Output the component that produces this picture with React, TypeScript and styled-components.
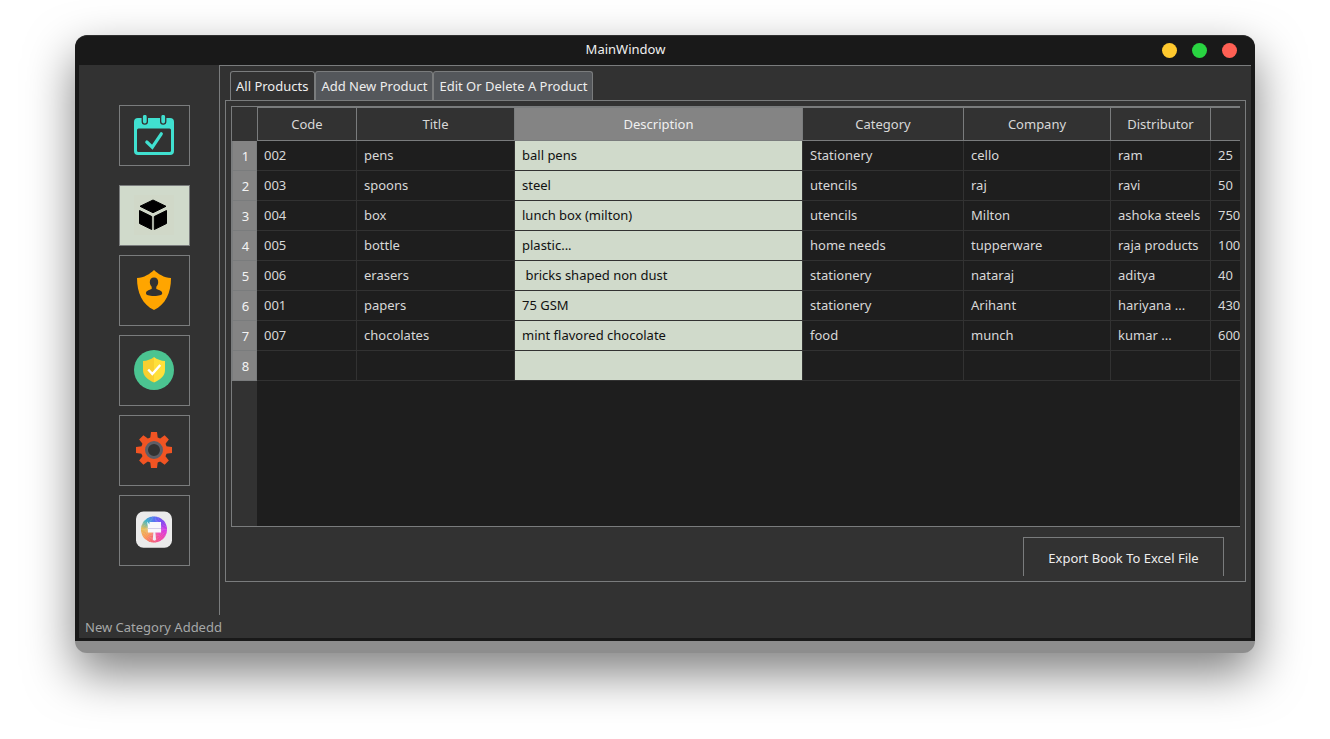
import React from "react";
import styled, { createGlobalStyle, css } from "styled-components";

const line = "#7a7c7d";
const panel = "#323232";

const GlobalStyle = createGlobalStyle`
  *, *::before, *::after { box-sizing: border-box; }
  body { margin: 0; background: #ffffff; }
  body, button {
    font-family: "Noto Sans", sans-serif;
    font-size: 13px;
    line-height: 18px;
  }
`;

const Desktop = styled.div`
  display: flex;
  min-height: 100vh;
  padding: 35px 75px 86px;
`;

const Window = styled.div`
  flex: 1;
  min-width: 0;
  display: flex;
  flex-direction: column;
  padding-bottom: 12px;
  border-radius: 12px;
  background: #8d8d8d;
  box-shadow: 0 20px 48px rgba(0, 0, 0, 0.5);
  overflow: hidden;
`;

const Frame = styled.div`
  flex: 1;
  display: flex;
  flex-direction: column;
  padding: 0 4px 3px;
  border-radius: 12px 12px 0 0;
  border-top: 1px solid #303030;
  background: #191919;
`;

const TitleBar = styled.header`
  display: flex;
  align-items: center;
  height: 29px;
  padding: 0 14px 0 10px;
`;

const Title = styled.h1`
  flex: 1;
  margin: 0;
  padding-bottom: 4px;
  font-size: 13px;
  font-weight: 400;
  text-align: center;
  color: #f0f0f0;
`;

const WindowControls = styled.div`
  display: flex;
  gap: 15px;
`;

const WindowControl = styled.button<{ $color: string }>`
  width: 15px;
  height: 15px;
  padding: 0;
  border: 0;
  border-radius: 50%;
  background: ${(p) => p.$color};
`;

const Body = styled.div`
  flex: 1;
  display: flex;
  background: ${panel};
`;

const Sidebar = styled.nav`
  flex: none;
  width: 140px;
  display: flex;
  flex-direction: column;
  gap: 9px;
  padding: 40px 29px 0 40px;
`;

const NavButton = styled.button<{ $compact?: boolean; $active?: boolean }>`
  display: flex;
  align-items: center;
  justify-content: center;
  height: ${(p) => (p.$compact ? 61 : 71)}px;
  padding: 0 2px 2px 0;
  border: 1px solid ${line};
  background: ${(p) => (p.$active ? "#d0dacb" : "transparent")};
  &:first-child { margin-bottom: 10px; }
`;

const Main = styled.main`
  flex: 1;
  min-width: 0;
  display: flex;
  flex-direction: column;
  padding: 5px 5px 33px;
  border-top: 1px solid ${line};
  border-left: 1px solid ${line};
`;

const Tabs = styled.div`
  display: flex;
  padding-left: 5px;
`;

const Tab = styled.button<{ $active?: boolean }>`
  height: 29px;
  padding: 0 ${(p) => (p.$active ? 6 : 5)}px 0 5px;
  border: 1px solid ${line};
  border-bottom: 0;
  border-radius: 3px 3px 0 0;
  background: ${(p) => (p.$active ? panel : "#54575b")};
  color: #eeeeee;
  white-space: nowrap;
`;

const Pane = styled.section`
  flex: 1;
  display: flex;
  flex-direction: column;
  padding: 5px;
  border: 1px solid ${line};
`;

const TableArea = styled.div`
  flex: 1;
  overflow: hidden;
  border: 1px solid ${line};
  border-right: 0;
  background: linear-gradient(to right, ${panel} 25px, #1e1e1e 25px);
`;

const Table = styled.table`
  width: 100%;
  min-width: 1008px;
  table-layout: fixed;
  border-collapse: separate;
  border-spacing: 0;
  color: #d8d8d8;
`;

const selectedCell = css`
  background: #d0dacb;
  color: #111111;
`;

const HeadCell = styled.th<{ $selected?: boolean }>`
  height: 34px;
  padding: 0;
  overflow: hidden;
  border: solid ${line};
  border-width: 1px 1px 1px 0;
  background: ${(p) => (p.$selected ? "#848484" : panel)};
  color: ${(p) => (p.$selected ? "#f0f0f0" : "#d8d8d8")};
  font-weight: 400;
  &:nth-child(2) { border-left-width: 1px; }
  &:last-child { border-right-width: 0; }
`;

const Corner = styled.td`
  padding: 0;
  background: ${panel};
`;

const RowHead = styled.th`
  height: 30px;
  padding: 0 0 0 2px;
  border: 1px solid ${line};
  border-top-width: 0;
  background: #848484;
  color: #f4f4f4;
  font-weight: 400;
`;

const Cell = styled.td<{ $selected?: boolean }>`
  height: 30px;
  padding: 0 0 2px 7px;
  overflow: hidden;
  white-space: pre;
  border: solid #323232;
  border-width: 0 1px 1px 0;
  ${(p) => p.$selected && selectedCell}
  &:last-child { border-right-width: 0; }
`;

const Actions = styled.div`
  display: flex;
  justify-content: flex-end;
  padding: 10px 16px 0 0;
`;

const ExportButton = styled.button`
  width: 201px;
  height: 39px;
  padding: 1px 0 0;
  border: 1px solid ${line};
  border-bottom: 0;
  background: transparent;
  color: #eeeeee;
`;

const StatusBar = styled.footer`
  height: 23px;
  padding: 3px 6px;
  background: ${panel};
  color: #a6a8a8;
`;

const Icon = styled.svg.attrs({ width: 40, height: 40, viewBox: "0 0 40 40", "aria-hidden": true })`
  display: block;
`;

const CalendarIcon = () => (
  <Icon fill="none">
    <rect y="3" width="40" height="37" rx="4" fill="#40e0d0" />
    <rect x="3" y="13.5" width="34" height="23.5" rx="1.5" fill={panel} />
    <path d="M10.8 0V6.5M29.2 0V6.5" stroke={panel} strokeWidth="6.4" strokeLinecap="round" />
    <path d="M10.8 1.8V6.5M29.2 1.8V6.5" stroke="#40e0d0" strokeWidth="3.8" strokeLinecap="round" />
    <path d="M12.8 27L18.3 32.2L27.3 18.8" stroke="#40e0d0" strokeWidth="3.2" strokeLinecap="round" />
  </Icon>
);

const BoxIcon = () => (
  <Icon stroke="#000" strokeWidth="1" strokeLinejoin="round">
    <rect width="40" height="40" fill="#d0d8c8" stroke="none" />
    <path d="M19 5L32 11.3L19 17.7L6 11.3Z" />
    <path d="M5.500 15.5L17.7 21.5V34.5L5.500 28.5Z" />
    <path d="M20.3 21.5L32.5 15.5V28.5L20.3 34.5Z" />
  </Icon>
);

const UserShieldIcon = () => (
  <Icon>
    <path d="M20 0C16 3.8 10 7.8 3 8C3 23 8.5 34.5 20 40C31.5 34.5 37 23 37 8C30 7.8 24 3.8 20 0Z" fill="#ffa500" />
    <path
      d="M20 7.6C17.3 7.6 15.7 9.6 15.8 12.3C15.9 14.5 16.9 15.8 17.7 16.8V19C15.5 20 12 20.3 12 23.3C12 25.2 15 26 20 26C25 26 28.2 25.2 28.2 23.3C28.2 20.3 24.5 20 22.3 19V16.8C23.2 15.8 24.1 14.5 24.2 12.3C24.3 9.6 22.7 7.6 20 7.6Z"
      fill={panel}
    />
  </Icon>
);

const CheckShieldIcon = () => (
  <Icon fill="none">
    <circle cx="20" cy="20" r="20" fill="#4bc491" />
    <path d="M20 7C17 9.5 13 10.8 9 11V20C9 26 14 30 20 32.5Z" fill="#f9cf30" />
    <path d="M20 7C23 9.5 27 10.8 31 11V20C31 26 26 30 20 32.5Z" fill="#ffe03a" />
    <path d="M14.2 19.5L18.3 24L26.3 15" stroke="#fff" strokeWidth="2.4" />
  </Icon>
);

const GearIcon = () => (
  <Icon fill="none">
    <g fill="#f15423">
      {[0, 45, 90, 135].map((angle) => (
        <path key={angle} d="M17 2H23L24 10V30L23 38H17L16 30V10Z" transform={`rotate(${angle} 20 20)`} />
      ))}
      <circle cx="20" cy="20" r="13" />
    </g>
    <circle cx="20" cy="20" r="7.5" fill={panel} stroke="#5e5e66" strokeWidth="3" />
  </Icon>
);

// Colour wheel stops, clockwise from the top.
const wheel = [
  [90, 110, 245],
  [130, 70, 240],
  [215, 60, 225],
  [240, 70, 170],
  [245, 95, 120],
  [250, 150, 85],
  [230, 190, 90],
  [60, 180, 200],
];

const wedges = Array.from({ length: 48 }, (_, i) => {
  const at = (i / 48) * wheel.length;
  const from = wheel[Math.floor(at)];
  const to = wheel[(Math.floor(at) + 1) % wheel.length];
  const mix = from.map((c, k) => Math.round(c + (to[k] - c) * (at % 1)));
  const point = (step: number) => {
    const a = (step / 48) * Math.PI * 2;
    return `${(20 + 13 * Math.sin(a)).toFixed(2)} ${(19.5 - 13 * Math.cos(a)).toFixed(2)}`;
  };
  return { d: `M20 19.5L${point(i)}A13 13 0 0 1 ${point(i + 1.2)}Z`, fill: `rgb(${mix.join(",")})` };
});

const PaintIcon = () => (
  <Icon>
    <rect x="2" y="1.5" width="36" height="36.3" rx="7.5" fill="#ebebeb" />
    {wedges.map((w) => (
      <path key={w.d} d={w.d} fill={w.fill} />
    ))}
    <path d="M13 11.5L15.5 14.5V12H27V22.5H13.8V16Z" fill="#f8f7fc" />
    <path d="M13.8 18.5H27" stroke="#d3cfe8" strokeWidth="1" />
    <path d="M19.4 22H21.3L22 29C22 31.3 18.8 31.3 18.8 29Z" fill="#f0edf7" />
  </Icon>
);

const navItems = [
  { label: "Calendar", Glyph: CalendarIcon, compact: true },
  { label: "Products", Glyph: BoxIcon, compact: true, active: true },
  { label: "Users", Glyph: UserShieldIcon },
  { label: "Security", Glyph: CheckShieldIcon },
  { label: "Settings", Glyph: GearIcon },
  { label: "Themes", Glyph: PaintIcon },
];

const columns = [
  { name: "Code", width: 100 },
  { name: "Title", width: 158 },
  { name: "Description", width: 288 },
  { name: "Category", width: 161 },
  { name: "Company", width: 147 },
  { name: "Distributor", width: 100 },
  { name: "" },
];
const selectedColumn = 2;

const rows = [
  ["002", "pens", "ball pens", "Stationery", "cello", "ram", "25"],
  ["003", "spoons", "steel", "utencils", "raj", "ravi", "50"],
  ["004", "box", "lunch box (milton)", "utencils", "Milton", "ashoka steels", "750"],
  ["005", "bottle", "plastic...", "home needs", "tupperware", "raja products", "100"],
  ["006", "erasers", " bricks shaped non dust", "stationery", "nataraj", "aditya", "40"],
  ["001", "papers", "75 GSM", "stationery", "Arihant", "hariyana ...", "430"],
  ["007", "chocolates", "mint flavored chocolate", "food", "munch", "kumar ...", "600"],
  ["", "", "", "", "", "", ""],
];

export default function App() {
  return (
    <>
      <GlobalStyle />
      <Desktop>
        <Window>
          <Frame>
            <TitleBar>
              <Title>MainWindow</Title>
              <WindowControls>
                <WindowControl $color="#ffc92e" aria-label="Minimize" />
                <WindowControl $color="#29d441" aria-label="Maximize" />
                <WindowControl $color="#ff6054" aria-label="Close" />
              </WindowControls>
            </TitleBar>
            <Body>
              <Sidebar>
                {navItems.map(({ label, Glyph, compact, active }) => (
                  <NavButton key={label} aria-label={label} $compact={compact} $active={active}>
                    <Glyph />
                  </NavButton>
                ))}
              </Sidebar>
              <Main>
                <Tabs role="tablist">
                  <Tab role="tab" aria-selected="true" $active>All Products</Tab>
                  <Tab role="tab" aria-selected="false">Add New Product</Tab>
                  <Tab role="tab" aria-selected="false">Edit Or Delete A Product</Tab>
                </Tabs>
                <Pane role="tabpanel">
                  <TableArea>
                    <Table>
                      <colgroup>
                        <col width={25} />
                        {columns.map((c) => (
                          <col key={c.name} width={c.width} />
                        ))}
                      </colgroup>
                      <thead>
                        <tr>
                          <Corner />
                          {columns.map((c, i) => (
                            <HeadCell key={c.name} scope="col" $selected={i === selectedColumn}>
                              {c.name}
                            </HeadCell>
                          ))}
                        </tr>
                      </thead>
                      <tbody>
                        {rows.map((row, r) => (
                          <tr key={r}>
                            <RowHead scope="row">{r + 1}</RowHead>
                            {row.map((value, i) => (
                              <Cell key={i} $selected={i === selectedColumn}>{value}</Cell>
                            ))}
                          </tr>
                        ))}
                      </tbody>
                    </Table>
                  </TableArea>
                  <Actions>
                    <ExportButton>Export Book To Excel File</ExportButton>
                  </Actions>
                </Pane>
              </Main>
            </Body>
            <StatusBar>New Category Addedd</StatusBar>
          </Frame>
        </Window>
      </Desktop>
    </>
  );
}
